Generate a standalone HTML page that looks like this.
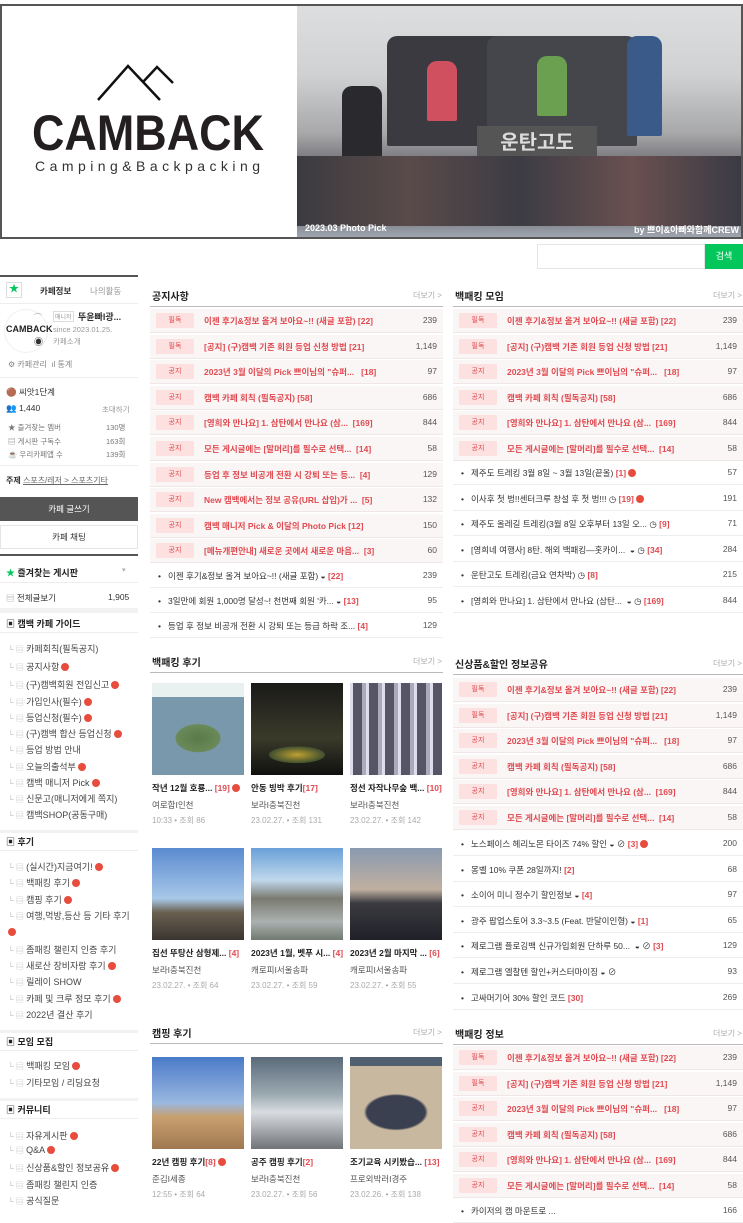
<!DOCTYPE html>
<html><head><meta charset="utf-8">
<style>
*{margin:0;padding:0;box-sizing:border-box}
body{width:743px;height:1211px;overflow:hidden;background:#fff;font-family:"Liberation Sans","Noto Sans CJK KR",sans-serif;color:#333;position:relative;font-size:9px}
.a{position:absolute}
#banner{left:0;top:4px;width:743px;height:235px;border:2px solid #555;background:#fff;overflow:hidden}
#photo{left:295px;top:0;width:446px;height:231px;background:linear-gradient(180deg,#dcdedf 0%,#cfd1d3 30%,#a8a8aa 55%,#6a6a70 70%,#55555c 85%,#a0a6b0 100%)}
.pp{position:absolute;border-radius:10px 10px 2px 2px}
#srch{left:537px;top:244px;width:168px;height:25px;border:1px solid #e5e5e5}
#sbtn{left:705px;top:244px;width:38px;height:25px;background:#03c75a;color:#fff;font-size:9px;text-align:center;line-height:25px}
#side{left:0;top:275px;width:138px}
.sec{font-weight:bold;font-size:9px;color:#222}
.mi{position:absolute;left:8px;font-size:9px;color:#444;white-space:nowrap}
.mi:before{content:"└ ▤ ";color:#bbb;font-size:8px}
.n{display:inline-block;width:8px;height:8px;border-radius:50%;background:#e74c3c;margin-left:2px;vertical-align:-1px}
.hd{font-size:10px;font-weight:bold;color:#222}
.more{font-size:8px;color:#aaa}
.row{position:absolute;height:24px;font-size:8.5px;white-space:nowrap}
.badge{position:absolute;left:6px;top:4px;width:38px;height:15px;background:#fde0e0;color:#e04a50;font-size:7px;text-align:center;line-height:15px;border-radius:1px}
.pt{position:absolute;left:54px;top:6px;color:#e04a50;font-weight:bold}
.cnt{position:absolute;right:6px;top:6px;color:#555}
.plain{position:absolute;left:8px;top:6px;color:#333}
.plain b{color:#e04a50}
.img{position:absolute;width:92px}
.cap{position:absolute;font-size:8.5px;font-weight:bold;color:#222;white-space:nowrap}
.cap b{color:#e04a50}
.au{position:absolute;font-size:8.5px;color:#555;white-space:nowrap}
.mt{position:absolute;font-size:8px;color:#aaa;white-space:nowrap}
hr{position:absolute;border:0;height:1px;background:#eee}
</style></head><body>
<div id="banner" class="a">
 <svg class="a" style="left:28px;top:53px" width="240" height="120" viewBox="0 0 240 120">
  <polyline points="68,41 98,7 130,41" fill="none" stroke="#111" stroke-width="2.5"/>
  <polyline points="113,23 127,8 143,24" fill="none" stroke="#111" stroke-width="2.5"/>
  <text x="2" y="91" font-family="Liberation Sans" font-size="50" font-weight="bold" fill="#231f20" textLength="232" lengthAdjust="spacingAndGlyphs">CAMBACK</text>
  <text x="5" y="112" font-family="Liberation Sans" font-size="14" fill="#333" textLength="225" lengthAdjust="spacing">Camping&amp;Backpacking</text>
 </svg>
 <div id="photo" class="a">
  <div class="pp" style="left:90px;top:30px;width:180px;height:110px;background:#3a3a40"></div>
  <div class="pp" style="left:190px;top:30px;width:150px;height:110px;background:#45454c"></div>
  <div class="pp" style="left:130px;top:55px;width:30px;height:60px;background:#d05060"></div>
  <div class="pp" style="left:240px;top:50px;width:30px;height:60px;background:#6aa050"></div>
  <div class="pp" style="left:330px;top:30px;width:35px;height:100px;background:#3a5a8a"></div>
  <div class="pp" style="left:45px;top:80px;width:40px;height:90px;background:#2a2a2e"></div>
  <div class="a" style="left:180px;top:120px;width:120px;height:30px;background:#555;color:#ddd;font-size:20px;font-weight:bold;text-align:center">운탄고도</div>
  <div class="a" style="left:0;top:150px;width:446px;height:70px;background:linear-gradient(90deg,#3b3b3f,#5a4a4a,#3c3c44,#6a5050,#3a3a44)"></div>
  <div class="a" style="left:8px;top:217px;color:#fff;font-size:9px;font-weight:bold">2023.03 Photo Pick</div>
  <div class="a" style="right:4px;top:217px;color:#fff;font-size:9px;font-weight:bold">by 쁘이&amp;아빠와함께CREW</div>
 </div>
</div>
<div id="srch" class="a"></div><div id="sbtn" class="a">검색</div>

<div id="side" class="a">
 <div class="a" style="left:0;top:0;width:138px;height:2px;background:#555"></div>
 <div class="a" style="left:6px;top:7px;width:16px;height:16px;border:1px solid #ddd;color:#03c75a;text-align:center;line-height:14px;font-size:10px">★</div>
 <div class="a" style="left:40px;top:10px;font-weight:bold;font-size:8.5px">카페정보</div>
 <div class="a" style="left:90px;top:10px;color:#999;font-size:8.5px">나의활동</div>
 <div class="a" style="left:0;top:28px;width:138px;height:1px;background:#eee"></div>
 <div class="a" style="left:4px;top:34px;width:44px;height:44px;border-radius:50%;border:1px solid #f0f0f0"></div>
 <div class="a" style="left:6px;top:49px;font-size:9px;font-weight:bold;color:#222">CAMBACK</div>
 <div class="a" style="left:34px;top:37px;font-size:8px;color:#aaa">⌒</div>
 <div class="a" style="left:34px;top:60px;font-size:9px">◉</div>
 <div class="a" style="left:53px;top:36px;font-size:6px;color:#999;border:1px solid #ddd;padding:0 1px">매니저</div>
 <div class="a" style="left:78px;top:35px;font-size:9px;font-weight:bold">뚜윤빠I광...</div>
 <div class="a" style="left:53px;top:50px;font-size:7.5px;color:#999">since 2023.01.25.</div>
 <div class="a" style="left:53px;top:61px;font-size:7.5px;color:#999">카페소개</div>
 <div class="a" style="left:8px;top:84px;font-size:8px;color:#888">⚙ 카페관리 &nbsp;ıl 통계</div>
 <div class="a" style="left:0;top:102px;width:138px;height:1px;background:#eee"></div>
 <div class="a" style="left:6px;top:111px;font-size:8.5px">🟤 씨앗1단계</div>
 <div class="a" style="left:6px;top:128px;font-size:8.5px"><span style="color:#4a7fd8">👥</span> 1,440</div>
 <div class="a" style="left:102px;top:129px;font-size:7.5px;color:#999">초대하기</div>
 <div class="a" style="left:8px;top:146px;font-size:7.5px;color:#777;line-height:13.5px">★ 즐겨찾는 멤버<br>▤ 게시판 구독수<br>☕ 우리카페앱 수</div>
 <div class="a" style="left:106px;top:146px;font-size:7.5px;color:#777;line-height:13.5px;text-align:right">130명<br>163회<br>139회</div>
 <div class="a" style="left:0;top:190px;width:138px;height:1px;background:#eee"></div>
 <div class="a" style="left:6px;top:200px;font-size:8px"><b>주제</b> <span style="color:#666;text-decoration:underline">스포츠/레저 &gt; 스포츠기타</span></div>
 <div class="a" style="left:0;top:222px;width:138px;height:24px;background:#555;color:#fff;font-size:8.5px;text-align:center;line-height:24px">카페 글쓰기</div>
 <div class="a" style="left:0;top:250px;width:138px;height:24px;border:1px solid #e5e5e5;font-size:8.5px;text-align:center;line-height:22px">카페 채팅</div>
 <div class="a" style="left:0;top:279px;width:138px;height:2px;background:#555"></div>
 <div class="a sec" style="left:6px;top:291px"><span style="color:#03c75a">★</span> 즐겨찾는 게시판</div>
 <div class="a" style="left:122px;top:291px;color:#aaa;font-size:7px">▾</div>
 <div class="a" style="left:0;top:307px;width:138px;height:1px;background:#eee"></div>
 <div class="a" style="left:6px;top:317px;font-size:8.5px"><span style="color:#aaa">▤</span> 전체글보기</div>
 <div class="a" style="left:108px;top:317px;font-size:8.5px">1,905</div>
 <div class="a" style="left:0;top:333px;width:138px;height:5px;background:#f2f2f2"></div>
</div>
<div id="menu"></div>

<div id="main"></div>

<script>
var H='';
function A(s){H+=s}
var menu=[[622,'sec','▣ 캠백 카페 가이드'],[647,'카페회칙(필독공지)'],[665,'공지사항',1],[683,'(구)캠백회원 전입신고',1],[700,'가입인사(필수)',1],[716,'등업신청(필수)',1],[732,'(구)캠백 합산 등업신청',1],[748,'등업 방법 안내'],[765,'오늘의출석부',1],[781,'캠백 매니저 Pick',1],[797,'신문고(매니저에게 쪽지)'],[813,'캠백SHOP(공동구매)'],
[840,'sec','▣ 후기'],[865,'(실시간)지금여기!',1],[881,'백패킹 후기',1],[898,'캠핑 후기',1],[914,'여행,먹방,등산 등 기타 후기'],[948,'좀패킹 챌린지 인증 후기'],[964,'새로산 장비자랑 후기',1],[980,'릴레이 SHOW'],[997,'카페 및 크루 정모 후기',1],[1013,'2022년 결산 후기'],
[1040,'sec','▣ 모임 모집'],[1064,'백패킹 모임',1],[1081,'기타모임 / 리딩요청'],
[1108,'sec','▣ 커뮤니티'],[1134,'자유게시판',1],[1150,'Q&A',1],[1166,'신상품&할인 정보공유',1],[1183,'좀패킹 챌린지 인증'],[1199,'공식질문']];
menu.forEach(function(m){
 if(m[1]=='sec'){A('<div class="a sec" style="left:6px;top:'+(m[0]-5)+'px">'+m[2]+'</div><hr style="left:0;top:'+(m[0]+10)+'px;width:138px">');}
 else A('<div class="mi" style="top:'+(m[0]-5)+'px">'+m[1].replace('&','&amp;')+(m[2]?'<span class="n"></span>':'')+'</div>');
});
A('<div class="n a" style="left:6px;top:928px"></div>');
[830,1030,1098].forEach(function(y){A('<div class="a" style="left:0;top:'+y+'px;width:138px;height:3px;background:#f2f2f2"></div>')});
function head(x,y,w,t){A('<div class="a hd" style="left:'+(x+2)+'px;top:'+(y-7)+'px">'+t+'</div><div class="a more" style="left:'+(x+w-30)+'px;top:'+(y-5)+'px">더보기 &gt;</div><div class="a" style="left:'+x+'px;top:'+(y+11)+'px;width:'+w+'px;height:1px;background:#bbb"></div>')}
var P=[['필독','이젠 후기&정보 올겨 보아요~!! (새글 포함) [22]','239'],['필독','[공지] (구)캠백 기존 회원 등업 신청 방법 [21]','1,149'],['공지','2023년 3월 이달의 Pick 쁘이님의 "슈퍼...&nbsp;&nbsp; [18]','97'],['공지','캠백 카페 회칙 (필독공지) [58]','686'],['공지','[영희와 만나요] 1. 삼탄에서 만나요 (삼... &nbsp;[169]','844'],['공지','모든 게시글에는 [말머리]를 필수로 선택... &nbsp;[14]','58']];
var PX=[['공지','등업 후 정보 비공개 전환 시 강퇴 또는 등... &nbsp;[4]','129'],['공지','New 캠백에서는 정보 공유(URL 삽입)가 ... &nbsp;[5]','132'],['공지','캠백 매니저 Pick & 이달의 Photo Pick [12]','150'],['공지','[메뉴개편안내] 새로운 곳에서 새로운 마음... &nbsp;[3]','60']];
function prow(x,y,w,r){A('<div class="row" style="left:'+x+'px;top:'+(y-12)+'px;width:'+w+'px;background:#fbf6f6;border-bottom:1px solid #f0e8e8"><div class="badge">'+r[0]+'</div><div class="pt">'+r[1].replace(/&(?![a-z]+;)/g,'&amp;')+'</div><div class="cnt">'+r[2]+'</div></div>')}
function lrow(x,y,w,t,c){A('<div class="row" style="left:'+x+'px;top:'+(y-12)+'px;width:'+w+'px;border-bottom:1px solid #eee"><div class="plain">•&nbsp;&nbsp; '+t+'</div><div class="cnt">'+c+'</div></div>')}
head(150,295,293,'공지사항');
var all=P.concat(PX);all.forEach(function(r,i){prow(150,321+i*25.6,293,r)});
lrow(150,576,293,'이젠 후기&amp;정보 올겨 보아요~!! (새글 포함) ◒ <b>[22]</b>','239');
lrow(150,601,293,'3일만에 회원 1,000명 달성~! 천번째 회원 \'카... ◒ <b>[13]</b>','95');
lrow(150,626,293,'등업 후 정보 비공개 전환 시 강퇴 또는 등급 하락 조... <b>[4]</b>','129');
head(453,295,290,'백패킹 모임');
P.forEach(function(r,i){prow(453,321+i*25.6,290,r)});
var L1=[['제주도 트레킹 3월 8일 ~ 3월 13일(끝올) <b>[1]</b><span class="n"></span>','57'],['이사후 첫 벙!!센터크루 창설 후 첫 벙!!! ◷ <b>[19]</b><span class="n"></span>','191'],['제주도 올레길 트레킹(3월 8일 오후부터 13일 오... ◷ <b>[9]</b>','71'],['[영희네 여행사] 8탄. 해외 백패킹—홋카이... &nbsp;◒ ◷ <b>[34]</b>','284'],['운탄고도 트레킹(금요 연차박) ◷ <b>[8]</b>','215'],['[영희와 만나요] 1. 삼탄에서 만나요 (삼탄... &nbsp;◒ ◷ <b>[169]</b>','844']];
L1.forEach(function(r,i){lrow(453,473+i*25.6,290,r[0],r[1])});
head(453,663,290,'신상품&amp;할인 정보공유');
P.forEach(function(r,i){prow(453,690+i*25.6,290,r)});
var L2=[['노스페이스 헤리노몬 타이즈 74% 할인 ◒ ⊘ <b>[3]</b><span class="n"></span>','200'],['몽벨 10% 쿠폰 28일까지! <b>[2]</b>','68'],['소이어 미니 정수기 할인정보 ◒ <b>[4]</b>','97'],['광주 팝업스토어 3.3~3.5 (Feat. 반달이인형) ◒ <b>[1]</b>','65'],['제로그램 플로깅백 신규가입회원 단하루 50... &nbsp;◒ ⊘ <b>[3]</b>','129'],['제로그램 엘찰텐 할인+커스터마이징 ◒ ⊘','93'],['고싸머기어 30% 할인 코드 <b>[30]</b>','269']];
L2.forEach(function(r,i){lrow(453,844+i*25.6,290,r[0],r[1])});
head(453,1033,290,'백패킹 정보');
P.forEach(function(r,i){prow(453,1058+i*25.6,290,r)});
lrow(453,1211,290,'카이저의 캠 마운트로 ...','166');
function card(x,y,h,bg,cap,au,mt){A('<div class="img" style="left:'+x+'px;top:'+y+'px;height:'+h+'px;background:'+bg+'"></div><div class="cap" style="left:'+x+'px;top:'+(y+h+7)+'px">'+cap+'</div><div class="au" style="left:'+x+'px;top:'+(y+h+24)+'px">'+au+'</div><div class="mt" style="left:'+x+'px;top:'+(y+h+40)+'px">'+mt+'</div>')}
head(150,661,293,'백패킹 후기');
card(152,683,92,'radial-gradient(ellipse 40% 25% at 50% 60%,#5a7a4a,#6a8a5a 60%,transparent 62%),linear-gradient(#e8f0f0 0 15%,#7a98ac 15%)','작년 12월 호룡... <b>[19]</b><span class="n"></span>','여로함I인천','10:33 • 조회 86');
card(251,683,92,'radial-gradient(ellipse 50% 15% at 50% 78%,#c0a030,#405030 60%,transparent 62%),linear-gradient(#1a1a18,#3a3a2a 60%,#101010)','안동 빙박 후기<b>[17]</b>','보라I충북진천','23.02.27. • 조회 131');
card(350,683,92,'repeating-linear-gradient(90deg,#dde 0 3px,#556 3px 12px,#aab 12px 16px),linear-gradient(#3a5a9a,#7a8aaa)','정선 자작나무숲 백... <b>[10]</b>','보라I충북진천','23.02.27. • 조회 142');
card(152,848,92,'linear-gradient(#5a8ad0,#a8c8e8 55%,#6a6050 70%,#3a3530)','집선 뚜탕산 삼형제... <b>[4]</b>','보라I충북진천','23.02.27. • 조회 64');
card(251,848,92,'linear-gradient(#6aa0d8,#c0d8ec 35%,#7a7a70 55%,#aab0b0 80%,#707a70)','2023년 1월, 벳푸 시... <b>[4]</b>','캐로피I서울송파','23.02.27. • 조회 59');
card(350,848,92,'linear-gradient(#8a9ab0,#c0b0a0 45%,#3a3a40 60%,#202028)','2023년 2월 마지막 ... <b>[6]</b>','캐로피I서울송파','23.02.27. • 조회 55');
head(150,1032,293,'캠핑 후기');
card(152,1057,92,'linear-gradient(#4a7ac8,#9ab8e0 50%,#c8a070 65%,#a07850)','22년 캠핑 후기<b>[8]</b><span class="n"></span>','준김I세종','12:55 • 조회 64');
card(251,1057,92,'linear-gradient(#5a6a7a,#9aa8b0 40%,#d8dce0 60%,#707478)','공주 캠핑 후기<b>[2]</b>','보라I충북진천','23.02.27. • 조회 56');
card(350,1057,92,'radial-gradient(ellipse 35% 20% at 50% 60%,#3a4050,#3a4050 90%,transparent),linear-gradient(#506070 0 10%,#c8b8a0 10%)','조기교육 시키봤습... <b>[13]</b>','프로외박러I경주','23.02.26. • 조회 138');
document.getElementById('main').innerHTML=H;
</script>
</body></html>
